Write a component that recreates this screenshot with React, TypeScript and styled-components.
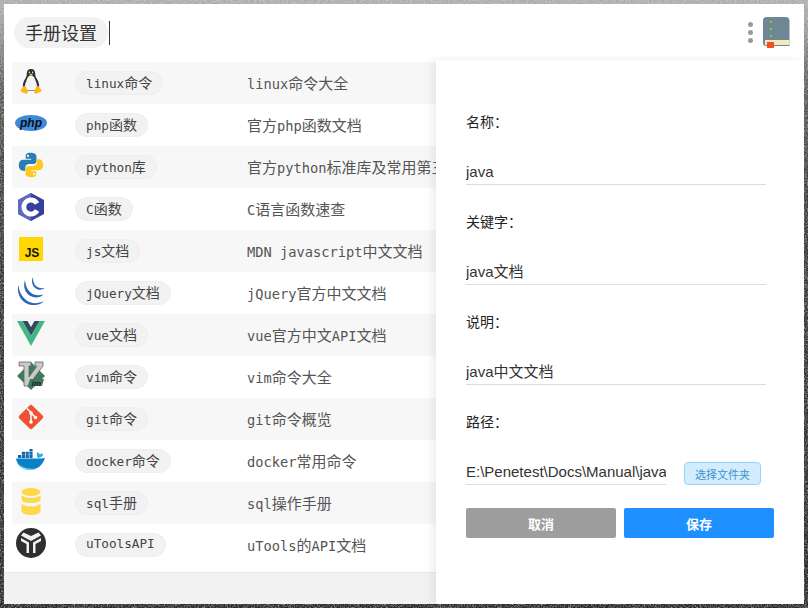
import React from "react";
import styled, { createGlobalStyle } from "styled-components";

const Global = createGlobalStyle`
  html, body { margin: 0; padding: 0; height: 100%; overflow: hidden; }
  body {
    background: linear-gradient(180deg, #a9adb0 0, #a9adb0 6px, #8d8d8d 40px, #5a5a5a 90px, #3a3a3a 220px, #2a2a2a 100%);
    font-family: "Liberation Sans", "Noto Sans CJK SC", sans-serif;
  }
`;

const Noise = styled.svg`
  position: fixed; inset: 0; width: 808px; height: 608px; z-index: 0;
`;
const Frame = styled.div`
  width: 800px; height: 600px; margin: 4px; background: #fff;
  display: flex; flex-direction: column; position: relative; overflow: hidden; z-index: 1;
`;
const TopBar = styled.header`
  height: 56px; display: flex; align-items: center; padding: 0 14px 0 10px; flex: none;
`;
const Title = styled.div`
  height: 31px; line-height: 30px; padding: 0 11px; border-radius: 16px; margin-top: 1px;
  background: #f2f2f2; color: #333; font-size: 18px; white-space: nowrap;
  font-family: "Noto Sans CJK SC", sans-serif; box-sizing: border-box;
`;
const Caret = styled.span`
  width: 1px; height: 24px; background: #333; margin-left: 1px; margin-top: 1px;
`;
const Spacer = styled.div` flex: 1; `;
const Dots = styled.div`
  display: flex; flex-direction: column; gap: 3px; margin-right: 9px;
  i { width: 5px; height: 5px; border-radius: 50%; background: #999; display: block; }
`;
const Body = styled.div` flex: 1; display: flex; flex-direction: column; min-height: 0; background: #f2f2f2; `;
const List = styled.div`
  width: 432px; height: 513px; padding: 2px 0 0 8px; box-sizing: border-box; background: #fff; overflow: hidden; flex: none;
  border-bottom: 1px solid #e9e9e9;
`;
const Row = styled.div<{ $odd: boolean }>`
  height: 42px; display: flex; align-items: center; width: 100%;
  background: ${(p) => (p.$odd ? "#f7f7f7" : "#fff")};
`;
const IconCell = styled.div`
  width: 38px; flex: none; display: flex; align-items: center; justify-content: center;
  height: 38px; margin-right: 25px; margin-top: -4px;
`;
const TagCell = styled.div` width: 172px; flex: none; display: flex; align-items: center; `;
const Tag = styled.span`
  height: 24px; line-height: 20px; padding: 0 10px; box-sizing: border-box;
  background: #f2f2f2; border: 1px solid #eee; border-radius: 12px; white-space: nowrap;
  font-family: "DejaVu Sans Mono", monospace; font-size: 12.7px; color: #444;
`;
const Desc = styled.div`
  white-space: nowrap; font-family: "DejaVu Sans Mono", monospace; font-size: 13.7px; color: #555;
  margin-top: -2px; overflow: hidden; width: 197px;
`;
const HanTag = styled.span` font-family: "Noto Sans CJK SC", sans-serif; font-size: 14px; `;
const HanDesc = styled.span` font-family: "Noto Sans CJK SC", sans-serif; font-size: 15px; `;
const Drawer = styled.aside`
  position: absolute; right: 0; top: 56px; bottom: 0; width: 368px; background: #fff;
  box-shadow: -4px 0 8px rgba(0,0,0,.07); padding: 51px 38px 0 30px; box-sizing: border-box;
`;
const Label = styled.div`
  height: 20px; line-height: 20px; font-size: 14px; color: #222;
  font-family: "Noto Sans CJK SC", sans-serif; margin-bottom: 28px;
`;
const Field = styled.div<{ $w?: number }>`
  width: ${(p) => p.$w ?? 300}px; height: 26px; line-height: 26px; font-size: 15px; color: #333;
  border-bottom: 1px solid #ddd; box-sizing: border-box; margin-bottom: 26px; white-space: nowrap; overflow: hidden; flex: none;
  font-family: "Liberation Sans", "Noto Sans CJK SC", sans-serif;
`;
const PathRow = styled.div` display: flex; align-items: flex-start; `;
const Pick = styled.button`
  margin-left: 18px; margin-top: 3px; width: 77px; height: 23px; padding: 0; border: 1px solid #91d5ff; border-radius: 4px;
  background: #d3edff; color: #3c94cf; font: 11px "Noto Sans CJK SC", sans-serif;
`;
const Actions = styled.div` display: flex; gap: 8px; margin-top: -3px; width: 308px; `;
const Btn = styled.button<{ $primary?: boolean }>`
  flex: 1; height: 30px; border: 0; border-radius: 2px; color: #fff; padding: 0;
  background: ${(p) => (p.$primary ? "#1e90ff" : "#9e9e9e")};
  font: 600 13px "Noto Sans CJK SC", sans-serif;
`;

const icons: Record<string, React.ReactNode> = {
  linux: (
    <svg width="22" height="25" viewBox="0 0 22 25">
      <path d="M11 0c-3 0-4.200 2-4.200 4.500 0 3-.8 4-2.300 6.500-1.300 2.300-2 5-1.500 7.500L5 22h12l2-3.500c.5-2.500-.2-5.200-1.500-7.500-1.500-2.500-2.300-3.500-2.300-6.500C15.200 2 14 0 11 0z" fill="#2c2f36" />
      <path d="M11 6.500c-2.800 0-3.500 2.500-4.500 5-1 2.300-1.800 4.500-1.300 6.500l1.800 3.500h8l1.800-3.500c.5-2-.3-4.200-1.300-6.500-1-2.500-1.700-5-4.500-5z" fill="#f4f4f4" />
      <path d="M8.700 4.800h4.600L11 7z" fill="#f2b01e" />
      <circle cx="9.300" cy="3.300" r=".7" fill="#fff" /><circle cx="12.700" cy="3.300" r=".7" fill="#fff" />
      <path d="M4.200 16.500L.5 21l1 2 5.500 2 1-3zM17.800 16.500l3.700 4.500-1 2-5.500 2-1-3z" fill="#fbb911" />
    </svg>
  ),
  php: (
    <svg width="32" height="16" viewBox="0 0 32 16">
      <ellipse cx="16" cy="8" rx="16" ry="8" fill="#3c8ad8" />
      <text x="16" y="11.500" textAnchor="middle" fontFamily="Liberation Sans" fontSize="12" fontWeight="700" fontStyle="italic" fill="#0c0c1c">php</text>
    </svg>
  ),
  python: (
    <svg width="26" height="26" viewBox="0 0 32 32">
      <path d="M15.800 1c-6 0-6.300 2.600-6.300 4v3.400h6.700v1.100H6.500C3 9.500 1 12 1 16s2 7 5 7h3v-3.800c0-2.500 2-4.500 4.500-4.500H19c2 0 3.700-1.500 3.700-3.500V5c0-2.400-2.700-4-6.900-4z" fill="#2a7cb8" />
      <circle cx="12.300" cy="4.800" r="1.300" fill="#fff" />
      <path d="M16.200 31c6 0 6.300-2.600 6.300-4v-3.400h-6.700v-1.100h9.700c3.500 0 5.500-2.500 5.500-6.500s-2-7-5-7h-3v3.800c0 2.500-2 4.500-4.500 4.500H13c-2 0-3.700 1.500-3.700 3.500V27c0 2.400 2.700 4 6.900 4z" fill="#ffc91f" />
      <circle cx="19.700" cy="27.200" r="1.300" fill="#fff" />
    </svg>
  ),
  c: (
    <svg width="26" height="28" viewBox="0 0 26 28">
      <path d="M13 0l13 7v14l-13 7L0 21V7z" fill="#35409f" />
      <path d="M0 21V7l13-7v5a9 9 0 0 0 0 18v5z" fill="#5c6bc0" />
      <path d="M13 4.500a9.500 9.500 0 1 0 8.200 14.300l-4.300-2.500A4.600 4.600 0 1 1 13 9.400a4.600 4.600 0 0 1 3.900 2.300l4.300-2.500A9.500 9.500 0 0 0 13 4.500z" fill="#fff" />
    </svg>
  ),
  js: (
    <svg width="24" height="24" viewBox="0 0 24 24">
      <rect width="24" height="24" fill="#ffd600" />
      <text x="13" y="20" textAnchor="middle" fontFamily="Liberation Sans" fontSize="12" fontWeight="700" fill="#111">JS</text>
    </svg>
  ),
  jq: (
    <svg width="28" height="28" viewBox="0 0 28 28">
      <path d="M1.500 8C-1 17 5 27 15 28c5 .5 9.500-1 12-4-6 3-13 3-18-1C4.500 19.500 2 14 1.500 8z" fill="#2a66b5" />
      <path d="M8 3c-2.500 7 .5 15 8 17 4 1 8 0 10.500-2.500-5 1.500-10 1-13.500-2.500C10 12.500 8.500 8 8 3z" fill="#2a66b5" />
      <path d="M16 0c-2.500 5 0 11 5 12.500 2.500.5 5 0 6.500-1.500-3.500.5-7 0-9.500-3-1.500-2-2-5-2-8z" fill="#2a66b5" />
    </svg>
  ),
  vue: (
    <svg width="28" height="25" viewBox="0 0 28 25">
      <path d="M0 0h5.500L14 14.500 22.500 0H28L14 25z" fill="#41b883" />
      <path d="M5.500 0h5L14 6l3.500-6h5L14 14.500z" fill="#35495e" />
    </svg>
  ),
  vim: (
    <svg width="28" height="29" viewBox="0 0 28 29">
      <path d="M14 1l14 14-14 14L0 15z" fill="#3d7a5f" />
      <path d="M2 1h12v4h-2v11L20 5h-2V1h8v4L11 25H7V5H2z" fill="#c9c9c9" stroke="#666" strokeWidth=".8" />
      <path d="M13 18h14l-2 7H11z" fill="#3d7a5f" />
      <text x="19.500" y="24.500" textAnchor="middle" fontFamily="Liberation Sans" fontSize="8" fontWeight="700" fontStyle="italic" fill="#222">im</text>
    </svg>
  ),
  git: (
    <svg width="26" height="26" viewBox="0 0 26 26">
      <rect x="3.800" y="3.800" width="18.400" height="18.400" rx="2" fill="#f05133" transform="rotate(45 13 13)" />
      <path d="M9 4.500l4 4M13 8.500v10M13 9l4.500 4.500" stroke="#fff" strokeWidth="1.500" fill="none" />
      <circle cx="13" cy="9" r="1.800" fill="#fff" /><circle cx="13" cy="18" r="1.800" fill="#fff" /><circle cx="17.500" cy="13.500" r="1.800" fill="#fff" />
    </svg>
  ),
  docker: (
    <svg width="30" height="21" viewBox="0 0 30 21">
      <path d="M0 9.500h24c1.500 0 3-.3 5-.5-2 7-8 12-15 12C6 21 1 16 0 9.500z" fill="#0a80c6" />
      <path d="M2 15c3 4 8 6 12 6 2 0 4-.5 6-1.500-7 1-13-.5-18-4.500z" fill="#7dd3f5" />
      <g fill="#1268a8">
        <rect x="2" y="6" width="3.200" height="3" /><rect x="5.800" y="6" width="3.200" height="3" /><rect x="9.600" y="6" width="3.200" height="3" /><rect x="13.400" y="6" width="3.200" height="3" />
        <rect x="5.800" y="2.800" width="3.200" height="3" /><rect x="9.600" y="2.800" width="3.200" height="3" /><rect x="13.400" y="2.800" width="3.200" height="3" /><rect x="13.400" y="0" width="3.200" height="2.500" />
      </g>
      <path d="M22 9c-1.500-2-1.500-4-.5-6 1 1 2 1.500 2.500 2.500 1-1 2-1.500 3-.5 0 2-1.500 3.500-5 4z" fill="#3aa8e0" />
    </svg>
  ),
  sql: (
    <svg width="20" height="27" viewBox="0 0 20 27">
      <g fill="#ffd84a">
        <ellipse cx="10" cy="4" rx="9.500" ry="4" />
        <path d="M.5 7c2 2 5 2.800 9.500 2.800S17.500 9 19.500 7v4.500c0 2-4 3.500-9.500 3.500S.5 13.500.5 11.500z" />
        <path d="M.5 15.500c2 2 5 2.800 9.500 2.800s7.500-.8 9.500-2.800V23c0 2-4 4-9.500 4S.5 25 .5 23z" />
      </g>
    </svg>
  ),
  utools: (
    <svg width="30" height="30" viewBox="0 0 30 30">
      <circle cx="15" cy="15" r="15" fill="#2f2f2f" />
      <path d="M7.500 4.500L15 8l7.500-3.500 2.500 3L15 13 5 7.500zM5 10l8 4.500V25h-2.500v-9L5 13zM25 10l-8 4.500V25h2.500v-9l5.500-3z" fill="#f1f1f1" />
    </svg>
  ),
};

const rows = [
  ["linux", "linux命令", "linux命令大全"],
  ["php", "php函数", "官方php函数文档"],
  ["python", "python库", "官方python标准库及常用第三方库文档"],
  ["c", "C函数", "C语言函数速查"],
  ["js", "js文档", "MDN javascript中文文档"],
  ["jq", "jQuery文档", "jQuery官方中文文档"],
  ["vue", "vue文档", "vue官方中文API文档"],
  ["vim", "vim命令", "vim命令大全"],
  ["git", "git命令", "git命令概览"],
  ["docker", "docker命令", "docker常用命令"],
  ["sql", "sql手册", "sql操作手册"],
  ["utools", "uToolsAPI", "uTools的API文档"],
];

function mixed(text: string, Han: typeof HanTag) {
  return text.split(/([\u4e00-\u9fff]+)/).map((part, i) =>
    i % 2 === 1 ? <Han key={i}>{part}</Han> : part
  );
}

export default function App() {
  return (
    <>
      <Global />
      <Noise aria-hidden="true">
        <filter id="grain">
          <feTurbulence type="fractalNoise" baseFrequency="0.7" numOctaves="2" seed="4" />
          <feColorMatrix values="0 0 0 0 .75  0 0 0 0 .75  0 0 0 0 .75  2 0 0 0 -.8" />
        </filter>
        <rect width="808" height="608" filter="url(#grain)" opacity=".7" />
      </Noise>
      <Frame>
        <TopBar>
          <Title>手册设置</Title>
          <Caret />
          <Spacer />
          <Dots><i /><i /><i /></Dots>
          <svg width="28" height="32" viewBox="0 0 28 32">
            <path d="M4.500 1h19A4 4 0 0 1 27.500 5v25H4a3 3 0 0 1-3-3V4.500A3.500 3.500 0 0 1 4.500 1z" fill="#6f8795" />
            <rect x="3" y="24" width="24.500" height="5" fill="#f7e7bd" />
            <rect x="5" y="26" width="7" height="6" fill="#f4511e" />
            <rect x="8" y="5" width="2" height="2" fill="#7ed321" /><rect x="8" y="12" width="2" height="2" fill="#7ed321" /><rect x="8" y="19" width="2" height="2" fill="#7ed321" />
          </svg>
        </TopBar>
        <Body>
          <List>
            {rows.map((r, i) => (
              <Row key={r[0]} $odd={i % 2 === 0}>
                <IconCell>{icons[r[0]]}</IconCell>
                <TagCell><Tag>{mixed(r[1], HanTag)}</Tag></TagCell>
                <Desc>{mixed(r[2], HanDesc)}</Desc>
              </Row>
            ))}
          </List>
        </Body>
        <Drawer>
          <Label>名称：</Label>
          <Field>java</Field>
          <Label>关键字：</Label>
          <Field>java文档</Field>
          <Label>说明：</Label>
          <Field>java中文文档</Field>
          <Label>路径：</Label>
          <PathRow>
            <Field $w={200}>E:\Penetest\Docs\Manual\java</Field>
            <Pick>选择文件夹</Pick>
          </PathRow>
          <Actions><Btn>取消</Btn><Btn $primary>保存</Btn></Actions>
        </Drawer>
      </Frame>
    </>
  );
}
